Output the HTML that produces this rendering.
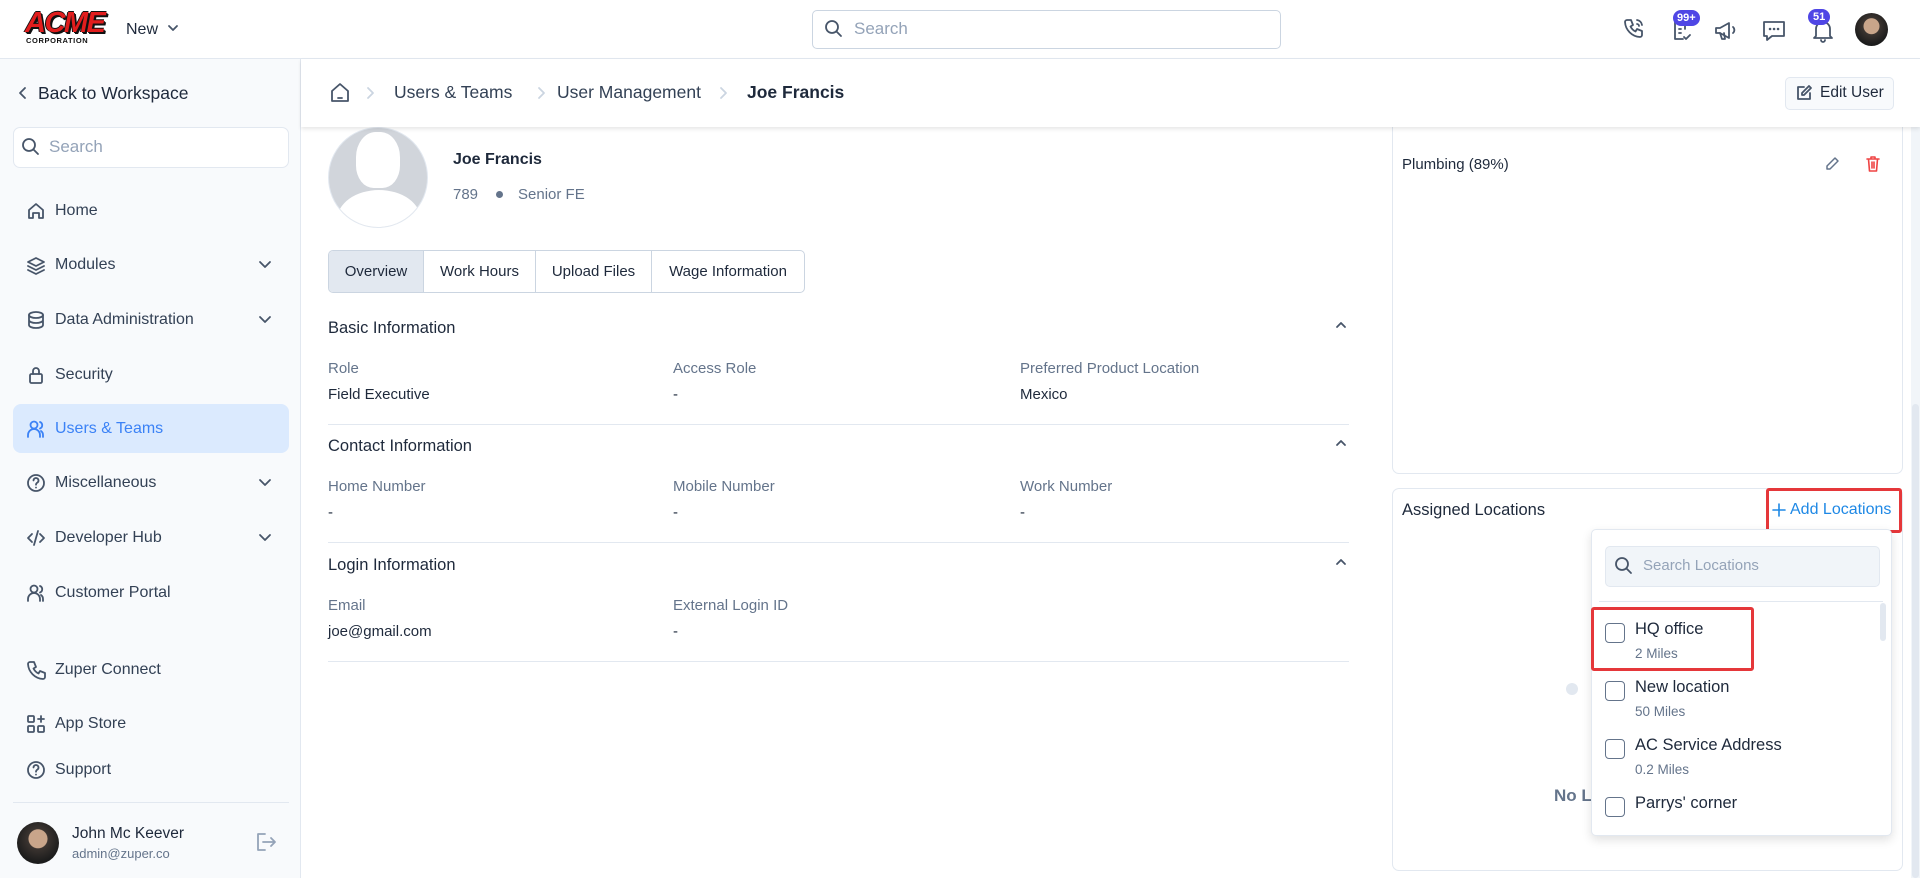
<!DOCTYPE html>
<html><head><meta charset="utf-8"><style>
*{box-sizing:border-box;margin:0;padding:0}
body{width:1920px;height:878px;overflow:hidden;background:#fff;font-family:"Liberation Sans",sans-serif;color:#1e293b;position:relative}
.a{position:absolute;white-space:nowrap}
svg{position:absolute;fill:none;stroke:#475569;stroke-width:1.8;stroke-linecap:round;stroke-linejoin:round}
.nav{font-size:16px;color:#334155}
.lbl{font-size:15px;color:#64748b}
.val{font-size:15px;color:#1e293b}
.sec{font-size:16.5px;color:#1e293b;font-weight:500}
.hr{position:absolute;height:1px;background:#e2e8f0}
.cb{position:absolute;width:20px;height:20px;border:1.5px solid #64748b;border-radius:4px;background:#fff}
</style></head><body>
<!-- header -->
<div class="a" style="left:0;top:0;width:1920px;height:59px;border-bottom:1px solid #e2e8f0;background:#fff"></div>
<div class="a" style="left:25px;top:9px;font:italic 900 29px/1 'Liberation Sans';color:#e11d1d;letter-spacing:-1.5px;text-shadow:1px 1px 0 #111,-1px 0 0 #111,0 -1px 0 #111,2px 2px 0 #111">ACME</div>
<div class="a" style="left:26px;top:37px;font:900 7.5px/1 'Liberation Sans';color:#111;letter-spacing:0.6px">CORPORATION</div>
<div class="a" style="left:126px;top:21px;font-size:16px;color:#1e293b">New</div>
<svg style="left:167px;top:23px" width="12" height="10"><path d="M2 3l4 4 4-4"/></svg>
<div class="a" style="left:812px;top:10px;width:469px;height:39px;border:1px solid #cbd5e1;border-radius:5px"></div>
<svg style="left:824px;top:19px" width="20" height="20"><circle cx="8" cy="8" r="6"/><path d="M13 13l4 4"/></svg>
<div class="a" style="left:854px;top:19px;font-size:17px;color:#94a3b8">Search</div>
<svg style="left:1621px;top:16px" width="28" height="28"><path d="M6 4h4l2 5-2.5 1.5a11 11 0 005 5L16 13l5 2v4a2 2 0 01-2 2A16 16 0 014 6a2 2 0 012-2"/><path d="M16 4a6 6 0 015 5M16 8a2 2 0 012 2"/></svg>
<svg style="left:1669px;top:17px" width="28" height="28"><path d="M6 4h10v8M6 4v18h8"/><path d="M10 12h2M10 16h2M15 20l2 2 4-4"/></svg>
<div class="a" style="left:1673px;top:10px;background:#4f46e5;color:#fff;font-size:11px;font-weight:bold;border-radius:9px;padding:2px 4px">99+</div>
<svg style="left:1712px;top:17px" width="28" height="28"><path d="M4 11v5h4l9 5V6L8 11z"/><path d="M8 16l2 6h3l-1-6M21 10a4 4 0 010 6"/></svg>
<svg style="left:1760px;top:17px" width="28" height="28"><path d="M4 5h20v14H12l-5 4v-4H4z"/><path d="M10 12h.1M14 12h.1M18 12h.1" style="stroke-width:2.5"/></svg>
<svg style="left:1809px;top:17px" width="28" height="28"><path d="M7 19V12a7 7 0 0114 0v7l2 2H5z"/><path d="M12 23a2 2 0 004 0"/></svg>
<div class="a" style="left:1808px;top:9px;background:#4f46e5;color:#fff;font-size:11px;font-weight:bold;border-radius:9px;padding:2px 5px">51</div>
<div class="a" style="left:1855px;top:13px;width:33px;height:33px;border-radius:50%;background:radial-gradient(circle at 50% 40%,#c9a58a 0 30%,#3b3430 32%,#1c1c1c 70%)"></div>

<!-- sidebar -->
<div class="a" style="left:0;top:59px;width:301px;height:819px;background:#f8fafc;border-right:1px solid #e2e8f0"></div>
<svg style="left:16px;top:85px" width="14" height="16"><path d="M9 3L4 8l5 5"/></svg>
<div class="a" style="left:38px;top:83px;font-size:17.5px;color:#1e293b">Back to Workspace</div>
<div class="a" style="left:13px;top:127px;width:276px;height:41px;border:1px solid #e2e8f0;border-radius:7px;background:#fff"></div>
<svg style="left:21px;top:137px" width="20" height="20"><circle cx="8" cy="8" r="6"/><path d="M13 13l4 4"/></svg>
<div class="a" style="left:49px;top:137px;font-size:17px;color:#94a3b8">Search</div>
<div class="a" style="left:13px;top:404px;width:276px;height:49px;border-radius:8px;background:#dbeafe"></div>
<svg style="left:26px;top:201px" width="20" height="20"><path d="M3 9l7-6 7 6v8h-4v-5H7v5H3z"/></svg>
<div class="a nav" style="left:55px;top:202px">Home</div>
<svg style="left:26px;top:256px" width="20" height="20"><path d="M10 2l8 4-8 4-8-4zM2 10l8 4 8-4M2 14l8 4 8-4"/></svg>
<div class="a nav" style="left:55px;top:256px">Modules</div>
<svg style="left:26px;top:310px" width="20" height="20"><ellipse cx="10" cy="5" rx="7" ry="3"/><path d="M3 5v10c0 1.7 3 3 7 3s7-1.3 7-3V5M3 10c0 1.7 3 3 7 3s7-1.3 7-3"/></svg>
<div class="a nav" style="left:55px;top:311px">Data Administration</div>
<svg style="left:26px;top:365px" width="20" height="20"><rect x="4" y="9" width="12" height="9" rx="1.5"/><path d="M7 9V6a3 3 0 016 0v3"/></svg>
<div class="a nav" style="left:55px;top:366px">Security</div>
<svg style="left:26px;top:419px;stroke:#3b82f6" width="20" height="20"><circle cx="8" cy="6" r="3.5"/><path d="M2 18v-2a5 5 0 0112 0v2M14 3a3.5 3.5 0 010 6.5M17 18v-2a5 5 0 00-2-4"/></svg>
<div class="a nav" style="left:55px;top:420px;color:#3b82f6">Users &amp; Teams</div>
<svg style="left:26px;top:473px" width="20" height="20"><circle cx="10" cy="10" r="8"/><path d="M7.5 7.5a2.5 2.5 0 114 2c-1 .6-1.5 1.2-1.5 2.2M10 14.5v.1"/></svg>
<div class="a nav" style="left:55px;top:474px">Miscellaneous</div>
<svg style="left:26px;top:528px" width="20" height="20"><path d="M6 6l-4 4 4 4M14 6l4 4-4 4M12 3l-4 14"/></svg>
<div class="a nav" style="left:55px;top:529px">Developer Hub</div>
<svg style="left:26px;top:583px" width="20" height="20"><circle cx="8" cy="6" r="3.5"/><path d="M2 18v-2a5 5 0 0112 0v2M14 3a3.5 3.5 0 010 6.5M17 18v-2a5 5 0 00-2-4"/></svg>
<div class="a nav" style="left:55px;top:584px">Customer Portal</div>
<svg style="left:26px;top:660px" width="20" height="20"><path d="M4 2h4l2 5-2.5 1.5a11 11 0 005 5L14 11l5 2v4a2 2 0 01-2 2A16 16 0 012 4a2 2 0 012-2"/></svg>
<div class="a nav" style="left:55px;top:661px">Zuper Connect</div>
<svg style="left:26px;top:714px" width="20" height="20"><rect x="2" y="2" width="6" height="6" rx="1"/><rect x="2" y="12" width="6" height="6" rx="1"/><rect x="12" y="12" width="6" height="6" rx="1"/><path d="M15 2v6M12 5h6"/></svg>
<div class="a nav" style="left:55px;top:715px">App Store</div>
<svg style="left:26px;top:760px" width="20" height="20"><circle cx="10" cy="10" r="8"/><path d="M7.5 7.5a2.5 2.5 0 114 2c-1 .6-1.5 1.2-1.5 2.2M10 14.5v.1"/></svg>
<div class="a nav" style="left:55px;top:761px">Support</div>
<svg style="left:258px;top:258px" width="14" height="14"><path d="M2 4l5 5 5-5"/></svg>
<svg style="left:258px;top:313px" width="14" height="14"><path d="M2 4l5 5 5-5"/></svg>
<svg style="left:258px;top:476px" width="14" height="14"><path d="M2 4l5 5 5-5"/></svg>
<svg style="left:258px;top:531px" width="14" height="14"><path d="M2 4l5 5 5-5"/></svg>
<div class="hr" style="left:13px;top:802px;width:276px"></div>
<div class="a" style="left:17px;top:822px;width:42px;height:42px;border-radius:50%;background:radial-gradient(circle at 50% 40%,#c9a58a 0 28%,#3b3430 30%,#1c1c1c 70%)"></div>
<div class="a" style="left:72px;top:825px;font-size:15.5px;color:#1e293b;font-weight:500">John Mc Keever</div>
<div class="a" style="left:72px;top:846px;font-size:13px;color:#64748b">admin@zuper.co</div>
<svg style="left:253px;top:830px;stroke:#94a3b8" width="26" height="24"><path d="M12 4H5v16h7M10 12h12M18 8l4 4-4 4"/></svg>

<!-- content -->
<div class="a" style="left:328px;top:127px;width:100px;height:101px;border-radius:50%;background:#d1d5db;border:1px solid #e2e8f0;overflow:hidden">
<div class="a" style="left:27px;top:4px;width:44px;height:56px;border-radius:45% 45% 40% 40%;background:#fff"></div>
<div class="a" style="left:8px;top:62px;width:84px;height:60px;border-radius:50% 50% 0 0;background:#fff"></div>
</div>
<div class="a" style="left:453px;top:151px;font-size:16px;font-weight:bold;color:#1e293b">Joe Francis</div>
<div class="a" style="left:453px;top:186px;font-size:15px;color:#64748b">789</div>
<div class="a" style="left:496px;top:191px;width:7px;height:7px;border-radius:50%;background:#64748b"></div>
<div class="a" style="left:518px;top:186px;font-size:15px;color:#64748b">Senior FE</div>
<div class="a" style="left:328px;top:250px;width:477px;height:43px;border:1px solid #cbd5e1;border-radius:5px;display:flex;font-size:15px;color:#1e293b;overflow:hidden">
<div style="width:94px;background:#e2e8f0;text-align:center;line-height:41px">Overview</div>
<div style="width:112px;border-left:1px solid #cbd5e1;text-align:center;line-height:41px">Work Hours</div>
<div style="width:116px;border-left:1px solid #cbd5e1;text-align:center;line-height:41px">Upload Files</div>
<div style="flex:1;border-left:1px solid #cbd5e1;text-align:center;line-height:41px">Wage Information</div>
</div>
<div class="a sec" style="left:328px;top:319px">Basic Information</div>
<div class="a sec" style="left:328px;top:437px">Contact Information</div>
<div class="a sec" style="left:328px;top:556px">Login Information</div>
<svg style="left:1334px;top:319px" width="14" height="12"><path d="M3 8l4-4 4 4"/></svg>
<svg style="left:1334px;top:437px" width="14" height="12"><path d="M3 8l4-4 4 4"/></svg>
<svg style="left:1334px;top:556px" width="14" height="12"><path d="M3 8l4-4 4 4"/></svg>
<div class="a lbl" style="left:328px;top:360px">Role</div><div class="a lbl" style="left:673px;top:360px">Access Role</div><div class="a lbl" style="left:1020px;top:360px">Preferred Product Location</div>
<div class="a val" style="left:328px;top:386px">Field Executive</div><div class="a val" style="left:673px;top:386px">-</div><div class="a val" style="left:1020px;top:386px">Mexico</div>
<div class="hr" style="left:328px;top:424px;width:1021px"></div>
<div class="a lbl" style="left:328px;top:478px">Home Number</div><div class="a lbl" style="left:673px;top:478px">Mobile Number</div><div class="a lbl" style="left:1020px;top:478px">Work Number</div>
<div class="a val" style="left:328px;top:504px">-</div><div class="a val" style="left:673px;top:504px">-</div><div class="a val" style="left:1020px;top:504px">-</div>
<div class="hr" style="left:328px;top:542px;width:1021px"></div>
<div class="a lbl" style="left:328px;top:597px">Email</div><div class="a lbl" style="left:673px;top:597px">External Login ID</div>
<div class="a val" style="left:328px;top:623px">joe@gmail.com</div><div class="a val" style="left:673px;top:623px">-</div>
<div class="hr" style="left:328px;top:661px;width:1021px"></div>

<!-- right panels -->
<div class="a" style="left:1392px;top:100px;width:511px;height:374px;border:1px solid #e2e8f0;border-radius:7px"></div>
<div class="a" style="left:1402px;top:156px;font-size:15px;color:#1e293b">Plumbing (89%)</div>
<svg style="left:1824px;top:156px;stroke:#64748b;stroke-width:1.5" width="16" height="16"><path d="M11 2l3 3-8 8H3v-3z"/></svg>
<svg style="left:1865px;top:155px;stroke:#ef4444;stroke-width:1.6" width="16" height="18"><path d="M2 4h12M6 4V2h4v2M3.5 4l1 12h7l1-12M7 7v6M9 7v6"/></svg>
<div class="a" style="left:1911px;top:59px;width:9px;height:819px;background:#f1f5f9"></div>
<div class="a" style="left:1912px;top:404px;width:7px;height:474px;background:#e2e8f0;border-radius:4px"></div>

<div class="a" style="left:1392px;top:488px;width:511px;height:383px;border:1px solid #e2e8f0;border-radius:7px"></div>
<div class="a" style="left:1402px;top:501px;font-size:16.5px;color:#1e293b;font-weight:500">Assigned Locations</div>
<div class="a" style="left:1566px;top:683px;width:12px;height:12px;border-radius:50%;background:#e2e8f0"></div>
<div class="a" style="left:1554px;top:786px;font-size:17px;font-weight:bold;color:#64748b">No L</div>
<div class="a" style="left:1766px;top:488px;width:136px;height:45px;border:3px solid #e5373a;border-radius:3px;background:#fff"></div>
<svg style="left:1772px;top:503px;stroke:#1e88e5;stroke-width:1.6" width="14" height="14"><path d="M7 1v12M1 7h12"/></svg>
<div class="a" style="left:1790px;top:501px;font-size:16px;color:#1e88e5">Add Locations</div>
<div class="a" style="left:1591px;top:529px;width:301px;height:307px;background:#fff;border:1px solid #e2e8f0;border-radius:5px;box-shadow:0 4px 10px rgba(0,0,0,.12)"></div>
<div class="a" style="left:1605px;top:546px;width:275px;height:41px;background:#f1f5f9;border:1px solid #e2e8f0;border-radius:5px"></div>
<svg style="left:1614px;top:556px" width="20" height="20"><circle cx="8" cy="8" r="6"/><path d="M13 13l4 4"/></svg>
<div class="a" style="left:1643px;top:557px;font-size:15px;color:#94a3b8">Search Locations</div>
<div class="hr" style="left:1599px;top:601px;width:284px"></div>
<div class="a" style="left:1880px;top:603px;width:6px;height:38px;background:#e2e8f0;border-radius:3px"></div>
<div class="a" style="left:1591px;top:607px;width:163px;height:64px;border:3px solid #e5373a;border-radius:3px"></div>
<div class="cb" style="left:1605px;top:623px"></div><div class="a" style="left:1635px;top:620px;font-size:16.5px">HQ office</div><div class="a" style="left:1635px;top:646px;font-size:13.5px;color:#64748b">2 Miles</div>
<div class="cb" style="left:1605px;top:681px"></div><div class="a" style="left:1635px;top:678px;font-size:16.5px">New location</div><div class="a" style="left:1635px;top:704px;font-size:13.5px;color:#64748b">50 Miles</div>
<div class="cb" style="left:1605px;top:739px"></div><div class="a" style="left:1635px;top:736px;font-size:16.5px">AC Service Address</div><div class="a" style="left:1635px;top:762px;font-size:13.5px;color:#64748b">0.2 Miles</div>
<div class="cb" style="left:1605px;top:797px"></div><div class="a" style="left:1635px;top:794px;font-size:16.5px">Parrys' corner</div>

<!-- breadcrumb bar -->
<div class="a" style="left:301px;top:59px;width:1619px;height:68px;background:#fff;box-shadow:0 2px 4px rgba(0,0,0,.1)"></div>
<svg style="left:328px;top:81px" width="24" height="24"><path d="M4 10l8-7 8 7v10H4z"/><path d="M10 17h4"/></svg>
<svg style="left:364px;top:86px;stroke:#cbd5e1" width="12" height="14"><path d="M4 2l5 5-5 5"/></svg>
<div class="a" style="left:394px;top:82px;font-size:17.5px;color:#334155">Users &amp; Teams</div>
<svg style="left:535px;top:86px;stroke:#cbd5e1" width="12" height="14"><path d="M4 2l5 5-5 5"/></svg>
<div class="a" style="left:557px;top:82px;font-size:17.5px;color:#334155">User Management</div>
<svg style="left:717px;top:86px;stroke:#cbd5e1" width="12" height="14"><path d="M4 2l5 5-5 5"/></svg>
<div class="a" style="left:747px;top:82px;font-size:17.5px;font-weight:bold;color:#1e293b">Joe Francis</div>
<div class="a" style="left:1785px;top:77px;width:109px;height:33px;border:1px solid #e2e8f0;border-radius:5px;background:#f8fafc"></div>
<svg style="left:1795px;top:84px" width="18" height="18"><path d="M9 3H3v12h12V9"/><path d="M14 2l2 2-7 7H7V9z"/></svg>
<div class="a" style="left:1820px;top:84px;font-size:15.5px;color:#1e293b">Edit User</div>
</body></html>
